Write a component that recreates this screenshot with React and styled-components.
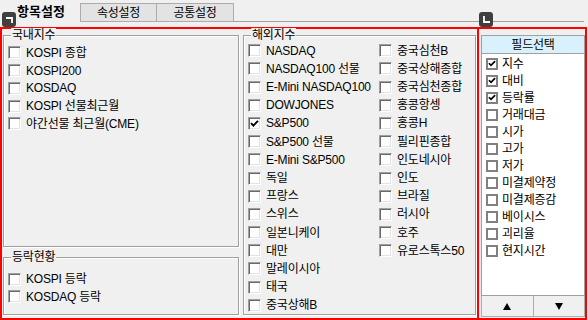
import styled, { createGlobalStyle } from 'styled-components';

const GlobalStyle = createGlobalStyle`
  html, body {
    margin: 0;
    padding: 0;
    background: #f0f0f0;
  }
  body {
    font-family: "Liberation Sans", "Noto Sans CJK KR", sans-serif;
    color: #000;
  }
`;

const domestic = [
    { label: 'KOSPI 종합' },
    { label: 'KOSPI200' },
    { label: 'KOSDAQ' },
    { label: 'KOSPI 선물최근월' },
    { label: '야간선물 최근월(CME)' },
];

const overseasLeft = [
    { label: 'NASDAQ' },
    { label: 'NASDAQ100 선물' },
    { label: 'E-Mini NASDAQ100' },
    { label: 'DOWJONES' },
    { label: 'S&P500', checked: true },
    { label: 'S&P500 선물' },
    { label: 'E-Mini S&P500' },
    { label: '독일' },
    { label: '프랑스' },
    { label: '스위스' },
    { label: '일본니케이' },
    { label: '대만' },
    { label: '말레이시아' },
    { label: '태국' },
    { label: '중국상해B' },
];

const overseasRight = [
    { label: '중국심천B' },
    { label: '중국상해종합' },
    { label: '중국심천종합' },
    { label: '홍콩항셍' },
    { label: '홍콩H' },
    { label: '필리핀종합' },
    { label: '인도네시아' },
    { label: '인도' },
    { label: '브라질' },
    { label: '러시아' },
    { label: '호주' },
    { label: '유로스톡스50' },
];

const movers = [{ label: 'KOSPI 등락' }, { label: 'KOSDAQ 등락' }];

const fields = [
    { label: '지수', checked: true },
    { label: '대비', checked: true },
    { label: '등락률', checked: true },
    { label: '거래대금' },
    { label: '시가' },
    { label: '고가' },
    { label: '저가' },
    { label: '미결제약정' },
    { label: '미결제증감' },
    { label: '베이시스' },
    { label: '괴리율' },
    { label: '현지시간' },
];

function Tick() {
    return (
        <svg width="9" height="9" viewBox="0 0 9 9">
            <path d="M1 4.2 L3.4 6.6 L8 1.8" fill="none" stroke="#000" strokeWidth="1.9" />
        </svg>
    );
}

function CheckRow({ item, h }) {
    return (
        <Row $h={h}>
            <Box>{item.checked && <Tick />}</Box>
            <RowText>{item.label}</RowText>
        </Row>
    );
}

export default function App() {
    return (
        <Page>
            <GlobalStyle />
            <TabBar>
                <Tab $active>항목설정</Tab>
                <Tab>속성설정</Tab>
                <Tab>공통설정</Tab>
                <TabLine />
            </TabBar>

            <Badge $left={2}>
                <svg width="14" height="15" viewBox="0 0 14 15">
                    <path d="M4 6 H10 V11" fill="none" stroke="#fff" strokeWidth="1.8" />
                </svg>
            </Badge>
            <Badge $left={479}>
                <svg width="14" height="15" viewBox="0 0 14 15">
                    <path d="M5 4 V10 H11" fill="none" stroke="#fff" strokeWidth="1.8" />
                </svg>
            </Badge>

            <Frame>
                <LeftPane>
                    <Column>
                        <Group $grow $pt={8}>
                            <GroupLabel>국내지수</GroupLabel>
                            {domestic.map((d) => (
                                <CheckRow key={d.label} item={d} h={17.75} />
                            ))}
                        </Group>
                        <Group $height={58} $pt={12.6}>
                            <GroupLabel>등락현황</GroupLabel>
                            {movers.map((d) => (
                                <CheckRow key={d.label} item={d} h={17.4} />
                            ))}
                        </Group>
                    </Column>
                    <Group $width={233} $pt={5.6}>
                        <GroupLabel>해외지수</GroupLabel>
                        <Split>
                            <SubList $width={131}>
                                {overseasLeft.map((d) => (
                                    <CheckRow key={d.label} item={d} h={18.2} />
                                ))}
                            </SubList>
                            <SubList>
                                {overseasRight.map((d) => (
                                    <CheckRow key={d.label} item={d} h={18.2} />
                                ))}
                            </SubList>
                        </Split>
                    </Group>
                </LeftPane>

                <RightPane>
                    <FieldHeader>필드선택</FieldHeader>
                    <FieldList>
                        {fields.map((f) => (
                            <FieldRow key={f.label}>
                                <FieldBox>{f.checked && <Tick />}</FieldBox>
                                <RowText>{f.label}</RowText>
                            </FieldRow>
                        ))}
                    </FieldList>
                    <ButtonBar>
                        <ArrowButton>
                            <svg width="8" height="7" viewBox="0 0 8 7">
                                <polygon points="4,0 8,7 0,7" fill="#000" />
                            </svg>
                        </ArrowButton>
                        <ArrowButton>
                            <svg width="8" height="7" viewBox="0 0 8 7">
                                <polygon points="0,0 8,0 4,7" fill="#000" />
                            </svg>
                        </ArrowButton>
                    </ButtonBar>
                </RightPane>
            </Frame>
        </Page>
    );
}

const Page = styled.div`
    position: relative;
    width: 588px;
    height: 320px;
    overflow: hidden;
    background: #f0f0f0;
    font-size: 12px;
    letter-spacing: -0.2px;
`;

const TabBar = styled.div`
    display: flex;
    align-items: flex-end;
    height: 27px;
    padding-left: 14px;
    box-sizing: border-box;
`;

const Tab = styled.div`
    box-sizing: border-box;
    display: flex;
    align-items: center;
    align-self: ${(p) => (p.$active ? 'flex-start' : 'auto')};
    height: ${(p) => (p.$active ? '23px' : '19px')};
    width: ${(p) => (p.$active ? '66px' : '77px')};
    margin-bottom: ${(p) => (p.$active ? '0' : '5px')};
    padding-left: ${(p) => (p.$active ? '3px' : '0')};
    justify-content: ${(p) => (p.$active ? 'flex-start' : 'center')};
    font-size: ${(p) => (p.$active ? '13px' : '12px')};
    font-weight: ${(p) => (p.$active ? 700 : 400)};
    background: ${(p) => (p.$active ? '#f0f0f0' : '#e3e3e3')};
    border: ${(p) => (p.$active ? 'none' : '1px solid #acacac')};
    border-left: none;
    letter-spacing: ${(p) => (p.$active ? '0' : '-0.3px')};
    line-height: 1;
    &:nth-child(2) {
        border-left: 1px solid #acacac;
    }
`;

const TabLine = styled.div`
    flex: 1;
    align-self: flex-start;
    height: 22px;
    margin-right: 4px;
    border-bottom: 1px solid #a0a0a0;
    box-sizing: border-box;
`;

const Badge = styled.div`
    position: absolute;
    top: 12px;
    left: ${(p) => p.$left}px;
    width: 14px;
    height: 15px;
    background: #3f3f3f;
    border-radius: 3px;
    display: flex;
    z-index: 2;
`;

const Frame = styled.div`
    display: flex;
    width: 587px;
    height: 293px;
    box-sizing: border-box;
    border: 2px solid #ff0000;
`;

const LeftPane = styled.div`
    flex: 0 0 475px;
    display: flex;
    gap: 4px;
    padding: 6px 1px 3px 1px;
    box-sizing: border-box;
`;

const Column = styled.div`
    width: 236px;
    display: flex;
    flex-direction: column;
    gap: 10px;
`;

const Group = styled.div`
    position: relative;
    box-sizing: border-box;
    ${(p) => (p.$grow ? 'flex: 1;' : '')}
    ${(p) => (p.$height ? `height: ${p.$height}px; flex: none;` : '')}
    ${(p) => (p.$width ? `width: ${p.$width}px;` : '')}
    padding: ${(p) => p.$pt}px 0 0 4px;
    border: 1px solid #a0a0a0;
    box-shadow: inset 1px 1px 0 #fff, 1px 1px 0 #fff;
`;

const GroupLabel = styled.span`
    position: absolute;
    top: -8px;
    left: 7px;
    padding: 0 1px;
    background: #f0f0f0;
    font-size: 12px;
    line-height: 14px;
`;

const Split = styled.div`
    display: flex;
`;

const SubList = styled.div`
    display: flex;
    flex-direction: column;
    ${(p) => (p.$width ? `width: ${p.$width}px; flex: none;` : 'flex: 1;')}
`;

const Row = styled.div`
    display: flex;
    align-items: center;
    gap: 5px;
    height: ${(p) => p.$h}px;
    white-space: nowrap;
`;

const RowText = styled.span`
    line-height: 14px;
    font-size: 12px;
`;

const Box = styled.span`
    flex: none;
    width: 13px;
    height: 13px;
    box-sizing: border-box;
    background: #fff;
    border: 1px solid;
    border-color: #a0a0a0 #fff #fff #a0a0a0;
    box-shadow: inset 1px 1px 0 #696969, inset -1px -1px 0 #e3e3e3;
    display: flex;
    align-items: center;
    justify-content: center;
`;

const RightPane = styled.div`
    flex: 1;
    display: flex;
    flex-direction: column;
    border-left: 2px solid #ff0000;
    padding: 6px 0 1px 2px;
    box-sizing: border-box;
`;

const FieldHeader = styled.div`
    height: 19px;
    box-sizing: border-box;
    display: flex;
    align-items: center;
    justify-content: center;
    background: #d9f1fc;
    border: 1px solid #a0a0a0;
    font-size: 12px;
    line-height: 1;
`;

const FieldList = styled.div`
    flex: 1;
    background: #fff;
    border: 1px solid #a0a0a0;
    border-top: none;
    padding: 1px 0 0 4px;
`;

const FieldRow = styled.div`
    display: flex;
    align-items: center;
    gap: 4px;
    height: 17px;
    white-space: nowrap;
`;

const FieldBox = styled.span`
    flex: none;
    width: 12px;
    height: 12px;
    box-sizing: border-box;
    background: #fff;
    border: 2px solid #808080;
    display: flex;
    align-items: center;
    justify-content: center;
`;

const ButtonBar = styled.div`
    display: flex;
    height: 21px;
`;

const ArrowButton = styled.div`
    flex: 1;
    display: flex;
    align-items: center;
    justify-content: center;
    background: #f0f0f0;
    border: 1px solid #adadad;
    border-top: none;
    box-sizing: border-box;
    & + & {
        border-left: none;
    }
`;
